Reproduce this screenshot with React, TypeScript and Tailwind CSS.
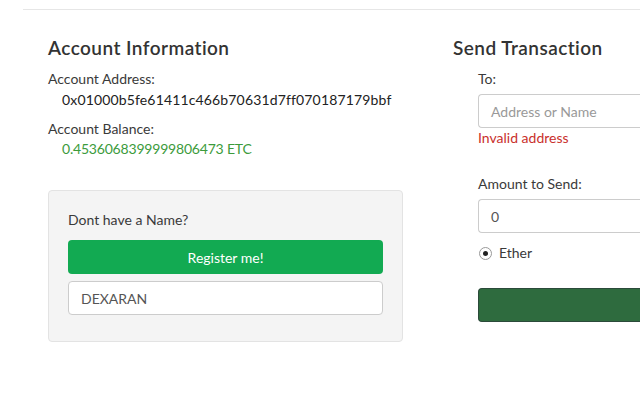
import React from "react";

export default function App() {
  return (
    <div className="w-[640px] h-[400px] overflow-hidden bg-white text-[#3a3a3a]" style={{ fontFamily: "Lato, 'Open Sans', sans-serif" }}>
      <div className="ml-[23px] mt-[9px] h-px bg-[#e6e6e6]" />
      <div className="flex pt-[27px] pl-[48px]">
        <div className="w-[355px] shrink-0">
          <h3 className="text-[19px] font-semibold leading-[22px] tracking-[0.45px] text-[#333]">Account Information</h3>
          <div className="mt-[10px] text-[14px] leading-[20px]">Account Address:</div>
          <div className="pl-[14px] mt-[1px] text-[14px] leading-[20px] tracking-[0.15px] text-[#222]">0x01000b5fe61411c466b70631d7ff070187179bbf</div>
          <div className="mt-[9px] text-[14px] leading-[20px]">Account Balance:</div>
          <div className="pl-[14px] mt-[0px] text-[14px] leading-[20px] tracking-[-0.2px] text-[#3c9b3c]">0.4536068399999806473 ETC</div>
          <div className="mt-[31px] rounded-[4px] border border-[#e3e3e3] bg-[#f4f4f4] px-[19px] pt-[19px] pb-[26px]">
            <div className="text-[14px] leading-[20px]">Dont have a Name?</div>
            <button className="mt-[10px] flex h-[34px] w-full items-center justify-center rounded-[4px] bg-[#12aa52] text-[14px] text-white">Register me!</button>
            <div className="mt-[7px] flex h-[34px] items-center rounded-[4px] border border-[#ccc] bg-white px-[12px] text-[14px] text-[#555]">DEXARAN</div>
          </div>
        </div>
        <div className="ml-[50px] flex-1 min-w-0">
          <h3 className="text-[19px] font-semibold leading-[22px] tracking-[0.45px] text-[#333]">Send Transaction</h3>
          <div className="pl-[25px]">
            <div className="mt-[10px] text-[14px] leading-[20px]">To:</div>
            <div className="mt-[5px] flex h-[34px] w-[200px] items-center rounded-l-[4px] border border-r-0 border-[#ccc] bg-white px-[12px] text-[14px] text-[#999]">Address or Name</div>
            <div className="mt-0 text-[14px] leading-[20px] text-[#c9302c]">Invalid address</div>
            <div className="mt-[26px] text-[14px] leading-[20px]">Amount to Send:</div>
            <div className="mt-[5px] flex h-[34px] w-[200px] items-center rounded-l-[4px] border border-r-0 border-[#ccc] bg-white px-[12px] text-[14px] text-[#555]">0</div>
            <div className="mt-[10px] flex items-center gap-[7px] text-[14px] leading-[20px]">
              <span className="ml-[1px] flex h-[13px] w-[13px] items-center justify-center rounded-full border border-[#999] bg-white">
                <span className="h-[5px] w-[5px] rounded-full bg-[#222]" />
              </span>
              <span>Ether</span>
            </div>
            <div className="mt-[25px] h-[34px] w-[200px] rounded-l-[4px] border border-r-0 border-[#2b4a3a] bg-[#2e6b3e]" />
          </div>
        </div>
      </div>
    </div>
  );
}
